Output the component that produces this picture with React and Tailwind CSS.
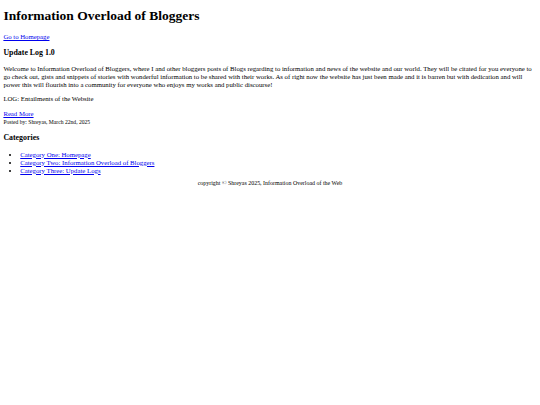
export default function App() {
  const link = 'text-[#0000ee] underline'
  return (
    <div className="bg-white min-h-[405px] flow-root">
      <div className="mx-[3.375px] text-[6.75px] leading-[1.185] text-black font-['Liberation_Serif',serif]">
        <h1 className="text-[2em] font-bold mt-[8px] mb-[9px]">Information Overload of Bloggers</h1>

        <p className="my-[6.5px]">
          <a href="#" className={link}>Go to Homepage</a>
        </p>

        <h3 className="text-[1.17em] font-bold my-[7.3px]">Update Log 1.0</h3>
        <p className="my-[6.5px]">
          Welcome to Information Overload of Bloggers, where I and other bloggers posts of Blogs regarding to information and news of the website and our world. They will be citated for you everyone to go check out, gists and snippets of stories with wonderful information to be shared with their works. As of right now the website has just been made and it is barren but with dedication and will power this will flourish into a community for everyone who enjoys my works and public discourse!
        </p>
        <p className="my-[6.5px]">LOG: Entailments of the Website</p>
        <p className="my-[6.5px]">
          <a href="#" className={link}>Read More</a>
          <br />
          <small className="text-[0.833em]">Posted by: Shreyas, March 22nd, 2025</small>
        </p>

        <h3 className="text-[1.17em] font-bold my-[7.3px]">Categories</h3>
        <ul className="mt-[8.3px] mb-[5.7px] pl-[16.875px] list-disc">
          <li><a href="#" className={link}>Category One: Homepage</a></li>
          <li><a href="#" className={link}>Category Two: Information Overload of Bloggers</a></li>
          <li><a href="#" className={link}>Category Three: Update Logs</a></li>
        </ul>

        <footer className="text-center">
          <p className="my-[5.7px] text-[5.95px]">copyright © Shreyas 2025, Information Overload of the Web</p>
        </footer>
      </div>
    </div>
  )
}
